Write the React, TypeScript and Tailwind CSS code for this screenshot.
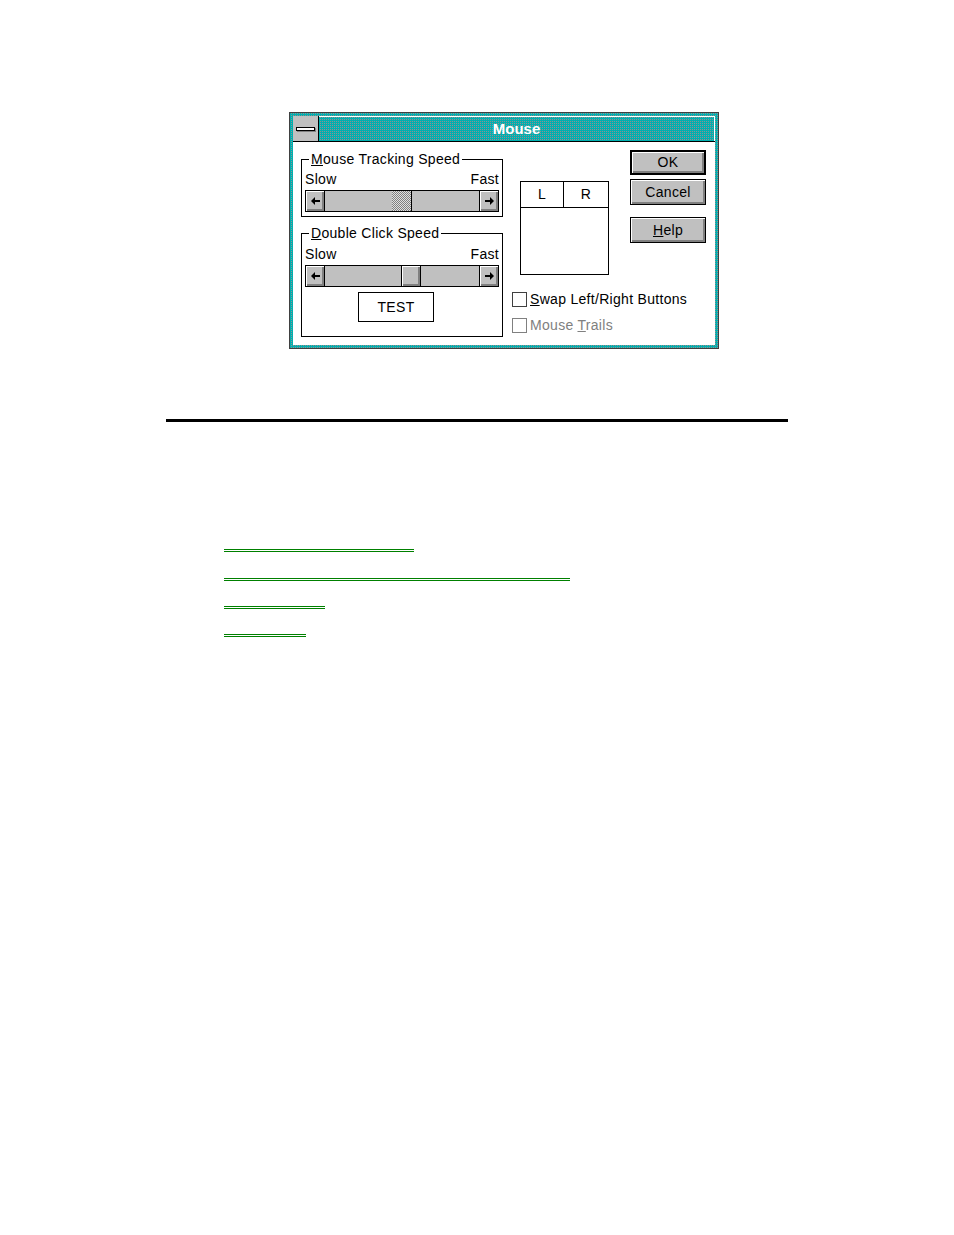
import React from 'react'

// Win 3.1 style "Mouse" control panel dialog

const bevel = 'shadow-[inset_1px_1px_0_#ffffff,inset_-2px_-2px_0_#808080]'
const dither =
  'bg-[image:linear-gradient(180deg,transparent_50%,#00b0b0_50%),linear-gradient(90deg,#00b0b0_50%,#909090_50%)] bg-[length:2px_2px]'

function Arrow({ dir }: { dir: 'left' | 'right' }) {
  return (
    <svg width="9" height="8" viewBox="0 0 9 8" className={dir === 'right' ? 'rotate-180' : ''}>
      <path d="M0 4 L4 0 V8 Z" fill="#000" />
      <rect x="3.5" y="3" width="5.5" height="2" fill="#000" />
    </svg>
  )
}

function ScrollBar({ offset, dithered }: { offset: string; dithered?: boolean }) {
  return (
    <div className="flex h-[22px] w-full border border-black bg-[#c0c0c0]">
      <div className={`w-[19px] border-r border-black flex items-center justify-center ${bevel}`}>
        <Arrow dir="left" />
      </div>
      <div className="flex-1 flex">
        {dithered ? (
          <div
            className={`${offset} w-[20px] border-r border-black bg-[image:conic-gradient(#808080_25%,#e0e0e0_0_50%,#808080_0_75%,#e0e0e0_0)] bg-[length:2px_2px]`}
          />
        ) : (
          <div className={`${offset} w-[20px] border-x border-black bg-[#c0c0c0] ${bevel}`} />
        )}
      </div>
      <div className={`w-[19px] border-l border-black flex items-center justify-center ${bevel}`}>
        <Arrow dir="right" />
      </div>
    </div>
  )
}

function GroupBox({ label, className, children }: { label: React.ReactNode; className: string; children: React.ReactNode }) {
  return (
    <div className={`relative w-[202px] border border-black px-[3px] ${className}`}>
      <span className="absolute left-[7px] -top-[9px] px-[2px] bg-white leading-[17px]">{label}</span>
      {children}
    </div>
  )
}

function SlowFast() {
  return (
    <div className="flex justify-between leading-[16px]">
      <span>Slow</span>
      <span>Fast</span>
    </div>
  )
}

function WinButton({ children, isDefault, className }: { children: React.ReactNode; isDefault?: boolean; className: string }) {
  return (
    <div
      className={`w-[76px] flex items-center justify-center bg-[#c0c0c0] border-black ${isDefault ? 'border-2' : 'border'} ${bevel} ${className}`}
    >
      {children}
    </div>
  )
}

export default function App() {
  return (
    <div className="w-[954px] h-[1235px] bg-white overflow-hidden font-['Liberation_Sans',Arial,sans-serif] text-[14px] tracking-[0.3px] text-black">
      <div className="pt-[112px] pl-[289px]">
        <div className={`w-[430px] h-[237px] border border-[#404040] p-[3px] ${dither}`}>
          <div className="h-full flex flex-col bg-white">
            {/* title bar */}
            <div className="h-[26px] flex border-b border-black">
              <div className="w-[26px] bg-[#c0c0c0] border-r border-black flex items-center justify-center">
                <div className="w-[19px] h-[4px] border border-black bg-white shadow-[1px_1px_0_#808080]" />
              </div>
              <div className={`flex-1 flex items-center justify-center border-t border-r border-white ${dither}`}>
                <span className="text-white font-bold text-[15px] tracking-normal">Mouse</span>
              </div>
            </div>

            {/* body */}
            <div className="flex-1 flex">
              <div className="w-[219px] pl-[8px] pt-[17px] shrink-0">
                <GroupBox
                  className="h-[58px] pt-[11px]"
                  label={
                    <>
                      <u>M</u>ouse Tracking Speed
                    </>
                  }
                >
                  <SlowFast />
                  <div className="mt-[3px]">
                    <ScrollBar offset="ml-[67px]" dithered />
                  </div>
                </GroupBox>

                <GroupBox
                  className="h-[104px] mt-[16px] pt-[12px]"
                  label={
                    <>
                      <u>D</u>ouble Click Speed
                    </>
                  }
                >
                  <SlowFast />
                  <div className="mt-[3px]">
                    <ScrollBar offset="ml-[76px]" />
                  </div>
                  <div className="mt-[5px] ml-[53px] w-[76px] h-[30px] border border-black bg-white flex items-center justify-center">
                    TEST
                  </div>
                </GroupBox>
              </div>

              <div className="w-[118px] shrink-0">
                <div className="ml-[8px] mt-[39px] w-[89px] h-[94px] border border-black">
                  <div className="flex h-[26px] border-b border-black">
                    <div className="w-[43px] border-r border-black flex items-center justify-center">L</div>
                    <div className="flex-1 flex items-center justify-center">R</div>
                  </div>
                </div>
                <div className="mt-[17px] flex items-center h-[15px]">
                  <div className="w-[15px] h-[15px] border border-[#404040] shrink-0" />
                  <span className="ml-[3px] whitespace-nowrap">
                    <u>S</u>wap Left/Right Buttons
                  </span>
                </div>
                <div className="mt-[11px] flex items-center h-[15px] text-[#808080]">
                  <div className="w-[15px] h-[15px] border border-[#808080] shrink-0" />
                  <span className="ml-[3px] whitespace-nowrap">
                    Mouse <u>T</u>rails
                  </span>
                </div>
              </div>

              <div className="shrink-0">
                <WinButton isDefault className="mt-[8px] h-[25px]">
                  OK
                </WinButton>
                <WinButton className="mt-[4px] h-[26px]">Cancel</WinButton>
                <WinButton className="mt-[12px] h-[26px]">
                  <u>H</u>elp
                </WinButton>
              </div>
            </div>
          </div>
        </div>
      </div>

      <div className="ml-[166px] mt-[70px] w-[622px] h-[3px] bg-black" />

      <div className="ml-[224px] mt-[127px]">
        <div className="w-[190px] h-[3px] border-y border-[#008000]" />
        <div className="mt-[26px] w-[346px] h-[3px] border-y border-[#008000]" />
        <div className="mt-[25px] w-[101px] h-[3px] border-y border-[#008000]" />
        <div className="mt-[25px] w-[82px] h-[3px] border-y border-[#008000]" />
      </div>
    </div>
  )
}
